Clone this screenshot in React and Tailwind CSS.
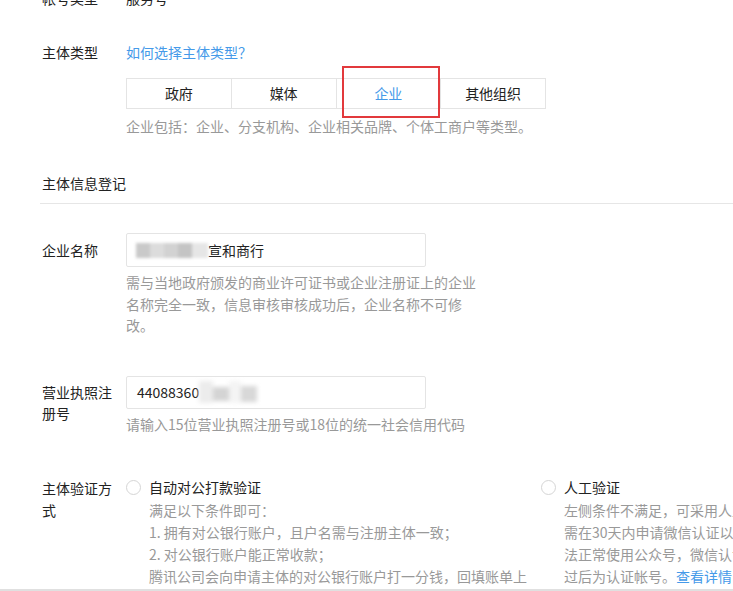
import React from "react";

function Radio() {
  return (
    <span className="inline-block w-[15px] h-[15px] rounded-full border border-[#d5d5d5] bg-white shrink-0" />
  );
}

export default function App() {
  const segs = ["政府", "媒体", "企业", "其他组织"];
  return (
    <div className="w-[733px] h-[591px] overflow-hidden bg-white text-[14px] text-[#222] font-['Noto_Sans_CJK_SC','Noto_Sans',sans-serif]">
      <div className="pl-[42px]">
        {/* 帐号类型 */}
        <div className="flex leading-[20px] mt-[-12px]">
          <div className="w-[84px] shrink-0">帐号类型</div>
          <div>服务号</div>
        </div>

        {/* 主体类型 */}
        <div className="flex mt-[34px]">
          <div className="w-[84px] shrink-0 leading-[20px]">主体类型</div>
          <div className="flex flex-col">
            <div className="leading-[20px] text-[#459ae9]">如何选择主体类型？</div>
            <div className="relative mt-[16px] flex w-[420px] h-[31px] border border-[#e4e4e4]">
              {segs.map((s, i) => (
                <div
                  key={s}
                  className={
                    "flex-1 flex items-center justify-center " +
                    (i > 0 ? "border-l border-[#e4e4e4] " : "") +
                    (i === 2 ? "text-[#459ae9]" : "text-[#222]")
                  }
                >
                  {s}
                </div>
              ))}
              <div className="absolute left-[215px] top-[-13px] w-[98px] h-[52px] border-2 border-[#e2393c]" />
            </div>
            <div className="mt-[7px] leading-[20px] text-[#999] whitespace-nowrap">
              企业包括：企业、分支机构、企业相关品牌、个体工商户等类型。
            </div>
          </div>
        </div>

        {/* 主体信息登记 */}
        <div className="mt-[37px] leading-[20px]">主体信息登记</div>
        <div className="mt-[10px] ml-[-2px] border-t border-[#e6e6e6]" />

        {/* 企业名称 */}
        <div className="flex mt-[29px]">
          <div className="w-[84px] shrink-0 leading-[34px]">企业名称</div>
          <div className="flex flex-col">
            <div className="w-[300px] h-[34px] border border-[#e4e4e4] rounded-[2px] flex items-center pl-[9px]">
              <span className="inline-flex w-[72px] h-[15px] blur-[1.5px]">
                <span className="w-[14px] h-full bg-[#c9c9c9]" />
                <span className="w-[14px] h-full bg-[#dcdcdc]" />
                <span className="w-[14px] h-full bg-[#d2d2d2]" />
                <span className="w-[14px] h-full bg-[#c4c4c4]" />
                <span className="w-[16px] h-full bg-[#e6e6e6]" />
              </span>
              <span>宣和商行</span>
            </div>
            <div className="mt-[5px] leading-[21.5px] text-[#999] whitespace-nowrap">
              <div>需与当地政府颁发的商业许可证书或企业注册证上的企业</div>
              <div>名称完全一致，信息审核审核成功后，企业名称不可修</div>
              <div>改。</div>
            </div>
          </div>
        </div>

        {/* 营业执照注册号 */}
        <div className="flex mt-[39px]">
          <div className="w-[84px] shrink-0 pr-[12px] pt-[6px] leading-[21px]">营业执照注册号</div>
          <div className="flex flex-col">
            <div className="w-[300px] h-[33px] border border-[#e4e4e4] rounded-[2px] flex items-center pl-[10px]">
              <span>44088360</span>
              <span className="inline-flex w-[58px] h-[22px] blur-[2px]">
                <span className="w-[14px] h-full bg-[#ececec]" />
                <span className="w-[16px] h-[14px] mt-[6px] bg-[#d4d4d4]" />
                <span className="w-[12px] h-full bg-[#f4f4f4]" />
                <span className="w-[16px] h-[16px] mt-[5px] bg-[#d8d8d8]" />
              </span>
            </div>
            <div className="mt-[4px] leading-[22px] text-[#999] whitespace-nowrap">
              请输入15位营业执照注册号或18位的统一社会信用代码
            </div>
          </div>
        </div>

        {/* 主体验证方式 */}
        <div className="flex mt-[42px]">
          <div className="w-[84px] shrink-0 pr-[12px] leading-[22px]">主体验证方式</div>
          <div className="flex">
            <div className="w-[415px] shrink-0">
              <div className="flex items-center h-[22px]">
                <Radio />
                <span className="ml-[8px]">自动对公打款验证</span>
              </div>
              <div className="pl-[23px] leading-[22px] text-[#999] whitespace-nowrap">
                <div>满足以下条件即可：</div>
                <div>1. 拥有对公银行账户，且户名需与注册主体一致；</div>
                <div>2. 对公银行账户能正常收款；</div>
                <div>腾讯公司会向申请主体的对公银行账户打一分钱，回填账单上</div>
              </div>
            </div>
            <div className="shrink-0">
              <div className="flex items-center h-[22px]">
                <Radio />
                <span className="ml-[8px]">人工验证</span>
              </div>
              <div className="pl-[23px] leading-[22px] text-[#999] whitespace-nowrap">
                <div>左侧条件不满足，可采用人工验证，</div>
                <div>需在30天内申请微信认证以完成验证，在此之前无</div>
                <div>法正常使用公众号，微信认证审核通</div>
                <div>
                  过后为认证帐号。<span className="text-[#459ae9]">查看详情</span>
                </div>
              </div>
            </div>
          </div>
        </div>
      </div>
      <div className="mt-[2px] h-[2px] bg-[#e0e0e0]" />
    </div>
  );
}
